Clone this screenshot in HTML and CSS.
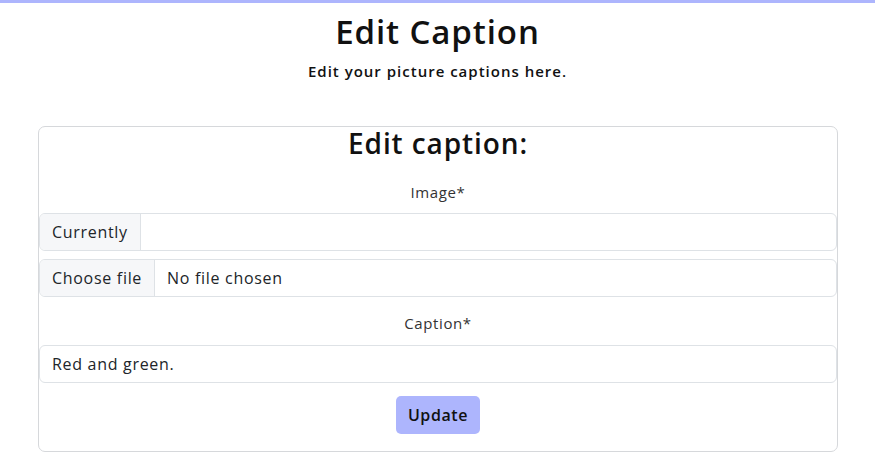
FILE: index.html
```html
<!DOCTYPE html>
<html lang="en">
<head>
<meta charset="utf-8">
<title>Edit Caption</title>
<link rel="stylesheet" href="styles.css">
</head>
<body>
<div class="topbar"></div>
<header class="intro">
  <h1 class="title">Edit Caption</h1>
  <p class="subtitle">Edit your picture captions here.</p>
</header>
<main class="card">
  <h2 class="card-title">Edit caption:</h2>
  <form class="form">
    <div class="label">Image<span class="req">*</span></div>
    <div class="group">
      <span class="addon">Currently</span>
      <span class="field"></span>
    </div>
    <div class="group group-file">
      <span class="addon">Choose file</span>
      <span class="field">No file chosen</span>
    </div>
    <div class="label label-caption">Caption<span class="req">*</span></div>
    <div class="group">
      <span class="field">Red and green.</span>
    </div>
    <div class="actions">
      <button type="button" class="btn">Update</button>
    </div>
  </form>
</main>
</body>
</html>
```

FILE: styles.css
```css
* { box-sizing: border-box; }
html, body { margin: 0; padding: 0; background: #fff; }
body {
  font-family: "Open Sans", "Liberation Sans", sans-serif;
  color: #212529;
  width: 875px;
}
.topbar { height: 3px; background: #adb5fd; }
.intro { text-align: center; }
.title {
  margin: 11px 0 0;
  font-size: 33px;
  font-weight: 600;
  line-height: 36px;
  letter-spacing: 0.9px;
  color: #111;
}
.subtitle {
  margin: 11px 0 0;
  font-size: 15px;
  font-weight: 600;
  line-height: 20px;
  letter-spacing: 1px;
  color: #111;
}
.card {
  margin: 45px 0 0 38px;
  width: 800px;
  border: 1px solid #d6d8db;
  border-radius: 7px;
  padding: 0 0 17px;
}
.card-title {
  text-align: center;
  margin: 0;
  padding-top: 0;
  font-size: 28px;
  font-weight: 600;
  line-height: 32px;
  letter-spacing: 0.9px;
  color: #111;
}
.form { display: flex; flex-direction: column; }
.label {
  text-align: center;
  font-size: 15px;
  line-height: 20px;
  letter-spacing: 0.6px;
  color: #333;
  margin-top: 23px;
  margin-bottom: 11px;
}
.label-caption { margin-top: 16px; margin-bottom: 12px; }
.req { color: #333; }
.group {
  display: flex;
  height: 38px;
  border: 1px solid #dee2e6;
  border-radius: 6px;
  overflow: hidden;
  font-size: 16px;
  letter-spacing: 0.7px;
}
.group-file { margin-top: 8px; }
.addon {
  display: flex;
  align-items: center;
  padding: 0 12px;
  background: #f6f7f9;
  border-right: 1px solid #dee2e6;
  color: #212529;
}
.field {
  display: flex;
  align-items: center;
  padding: 0 12px;
  flex: 1;
  color: #212529;
}
.actions { display: flex; justify-content: center; margin-top: 13px; }
.btn {
  font-family: inherit;
  font-size: 16px;
  font-weight: 600;
  letter-spacing: 0.6px;
  color: #111;
  background: #adb5fd;
  border: none;
  border-radius: 5px;
  width: 84px;
  height: 38px;
  padding: 0;
}
```
